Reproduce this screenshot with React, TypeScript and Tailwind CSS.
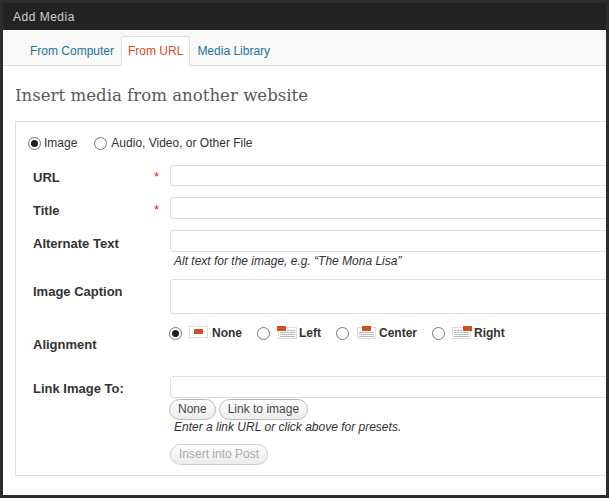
const orange = "#d54e21";

function Radio({ checked }: { checked?: boolean }) {
  return (
    <span className="flex h-[13px] w-[13px] shrink-0 items-center justify-center rounded-full border border-[#777] bg-white">
      {checked && <span className="h-[7px] w-[7px] rounded-full bg-[#222]" />}
    </span>
  );
}

function AlignIcon({ kind }: { kind: "none" | "left" | "center" | "right" }) {
  const flagX = kind === "left" ? 0 : kind === "right" ? 12 : 6;
  const flagY = kind === "none" ? 3 : 0;
  const boxY = kind === "none" ? 0.5 : 1.5;
  return (
    <svg width="20" height="14" viewBox="0 0 20 14" className="shrink-0 overflow-visible">
      <rect x="1.5" y={boxY} width="18" height="11" fill="#fff" stroke="#ddd" />
      {kind !== "none" &&
        [4.5, 6.5, 8.5, 10.5].map((y, i) => {
          if (kind === "center" && i === 0) return null;
          const x1 = kind === "left" && i === 0 ? 10 : 3;
          const x2 = kind === "right" && i === 0 ? 11 : 18;
          return <line key={y} x1={x1} x2={x2} y1={y} y2={y} stroke="#bbb" />;
        })}
      <rect x={flagX} y={flagY} width="9" height="5" fill={orange} />
    </svg>
  );
}

function FormInput({ height }: { height: string }) {
  return <div className={`${height} w-full rounded-[3px] border border-[#dfdfdf] bg-white`} />;
}

function PillButton({ label, disabled }: { label: string; disabled?: boolean }) {
  return (
    <button
      className={`h-[21px] rounded-[11px] border bg-gradient-to-b from-white to-[#ececec] text-[12px] leading-[19px] ${
        disabled ? "w-[98px] border-[#ccc] text-[#aaa]" : "border-[#bbb] px-[8px] text-[#464646]"
      }`}
    >
      {label}
    </button>
  );
}

function Label({ text, required }: { text: string; required?: boolean }) {
  return (
    <div className="flex w-[137px] shrink-0 justify-between pr-[11px] text-[13px] font-bold leading-[16px] text-[#333]">
      <span>{text}</span>
      {required && <span className="-mt-px text-[12px] font-normal text-[#ff0000]">*</span>}
    </div>
  );
}

function App() {
  const tabs = ["From Computer", "From URL", "Media Library"];

  return (
    <div
      className="h-[498px] w-[609px] overflow-hidden bg-[#2b2b2b] px-[3px] pt-[3px]"
      style={{ fontFamily: '"Liberation Sans", Arial, sans-serif' }}
    >
      <div className="flex h-[27px] items-center bg-[#222] pl-[10px] text-[12px] tracking-[0.5px] text-[#cfcfcf]">
        Add Media
      </div>
      <div className="h-[465px] overflow-hidden bg-white">
        {/* tabs */}
        <div className="flex h-[36px] items-end border-b border-[#dfdfdf] bg-[#f9f9f9] pl-[20px] text-[12px]">
          {tabs.map((tab) => (
            <div
              key={tab}
              className={
                tab === "From URL"
                  ? "relative -mb-px flex h-[30px] items-center rounded-t-[3px] border border-[#dfdfdf] border-b-white bg-white px-[6px] text-[#d54e21]"
                  : "flex h-[29px] items-center px-[7px] text-[#21759b]"
              }
            >
              {tab}
            </div>
          ))}
        </div>

        <h3
          className="ml-[12px] mt-[18px] text-[16.6px] leading-[24px] text-[#5a5a5a]"
          style={{ fontFamily: '"DejaVu Serif", Georgia, serif' }}
        >
          Insert media from another website
        </h3>

        {/* form box */}
        <div className="ml-[12px] mt-[13px] h-[355px] w-[640px] border border-[#dfdfdf] pl-[12px] pt-[14px]">
          <div className="flex items-center text-[12px] leading-[14px] text-[#333]">
            <Radio checked />
            <span className="ml-[3px]">Image</span>
            <span className="ml-[17px]">
              <Radio />
            </span>
            <span className="ml-[4px]">Audio, Video, or Other File</span>
          </div>

          <div className="ml-[5px] mt-[15px] flex flex-col">
            <div className="flex h-[32px] items-start">
              <div className="pt-[5px]">
                <Label text="URL" required />
              </div>
              <FormInput height="h-[21px]" />
            </div>
            <div className="flex h-[33px] items-start">
              <div className="pt-[6px]">
                <Label text="Title" required />
              </div>
              <FormInput height="h-[22px]" />
            </div>
            <div className="flex h-[49px] items-start">
              <div className="pt-[6px]">
                <Label text="Alternate Text" />
              </div>
              <div className="w-full">
                <FormInput height="h-[22px]" />
                <p className="ml-[4px] mt-[2px] text-[12px] italic leading-[14px] text-[#333]">
                  Alt text for the image, e.g. “The Mona Lisa”
                </p>
              </div>
            </div>
            <div className="flex h-[40px] items-start">
              <div className="pt-[5px]">
                <Label text="Image Caption" />
              </div>
              <FormInput height="h-[35px]" />
            </div>
            <div className="flex h-[57px] items-start">
              <div className="pt-[18px]">
                <Label text="Alignment" />
              </div>
              <div className="-ml-px flex items-center pt-[7px] text-[12px] font-bold leading-[14px] text-[#333]">
                <Radio checked />
                <span className="ml-[6px]">
                  <AlignIcon kind="none" />
                </span>
                <span className="ml-[4px]">None</span>
                <span className="ml-[15px]">
                  <Radio />
                </span>
                <span className="ml-[7px]">
                  <AlignIcon kind="left" />
                </span>
                <span className="ml-[2px]">Left</span>
                <span className="ml-[15px]">
                  <Radio />
                </span>
                <span className="ml-[7px]">
                  <AlignIcon kind="center" />
                </span>
                <span className="ml-[3px]">Center</span>
                <span className="ml-[15px]">
                  <Radio />
                </span>
                <span className="ml-[6px]">
                  <AlignIcon kind="right" />
                </span>
                <span className="ml-[3px]">Right</span>
              </div>
            </div>
            <div className="flex items-start">
              <div className="pt-[5px]">
                <Label text="Link Image To:" />
              </div>
              <div className="w-full">
                <FormInput height="h-[22px]" />
                <div className="-ml-px mt-[1px] flex gap-[3px]">
                  <PillButton label="None" />
                  <PillButton label="Link to image" />
                </div>
                <p className="ml-[4px] text-[12px] italic leading-[14px] text-[#333]">
                  Enter a link URL or click above for presets.
                </p>
                <div className="mt-[7px]">
                  <PillButton label="Insert into Post" disabled />
                </div>
              </div>
            </div>
          </div>
        </div>
      </div>
    </div>
  );
}

export default App;
